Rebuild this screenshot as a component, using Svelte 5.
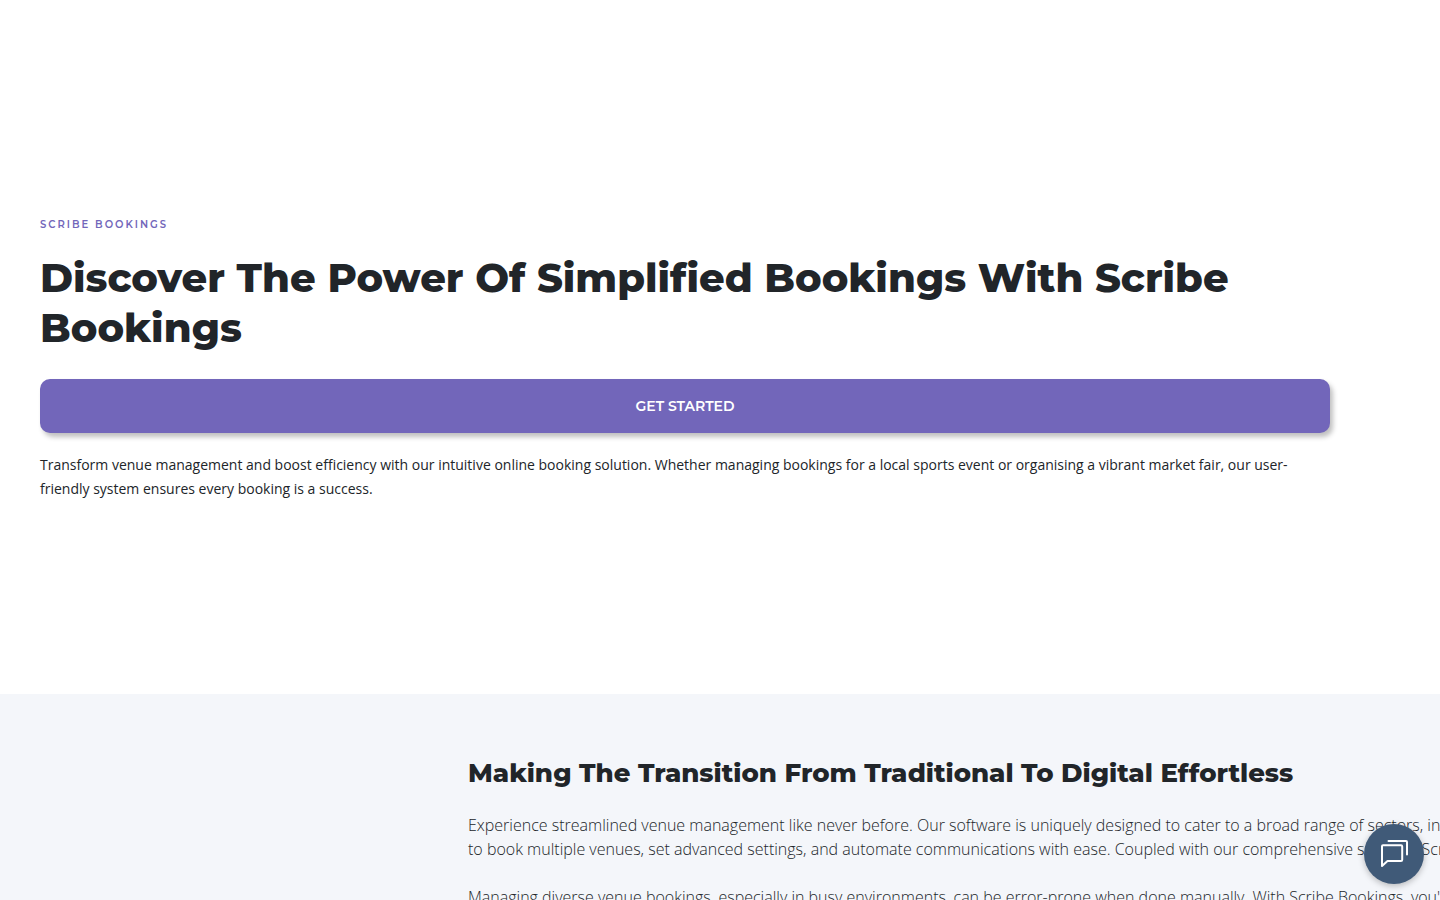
<script>
	let chatOpen = $state(false)

	const toggleChat = () => {
		chatOpen = !chatOpen
	}
</script>

<main>
	<section class="hero">
		<p class="eyebrow">Scribe Bookings</p>
		<h1>Discover The Power Of Simplified Bookings With Scribe Bookings</h1>
		<a href="#started" class="cta">Get Started</a>
		<p class="intro">
			Transform venue management and boost efficiency with our intuitive online booking solution. Whether managing bookings for a local sports event or organising a vibrant market fair, our user-friendly system ensures every booking is a success.
		</p>
	</section>

	<section class="feature" id="started">
		<div class="copy">
			<h2>Making The Transition From Traditional To Digital Effortless</h2>
			<p>
				Experience streamlined venue management like never before. Our software is uniquely designed to cater to a broad range of sectors, including<br>
				to book multiple venues, set advanced settings, and automate communications with ease. Coupled with our comprehensive support, Scribe
			</p>
			<p>Managing diverse venue bookings, especially in busy environments, can be error-prone when done manually. With Scribe Bookings, you'll</p>
		</div>
	</section>
</main>

<button class="chat-btn" aria-label="Open chat" aria-expanded={chatOpen} onclick={toggleChat}>
	<svg viewBox="0 0 30 30" width="30" height="30" fill="none" stroke="#fff" stroke-width="2" stroke-linejoin="round" stroke-linecap="round">
		<path d="M4 6.2h18a1.2 1.2 0 0 1 1.2 1.2v13.3a1.2 1.2 0 0 1-1.2 1.2H8.5L3 27V7.2a1 1 0 0 1 1-1z" />
		<path d="M9.5 2H27a1 1 0 0 1 1 1v12.5" />
	</svg>
</button>

<style>
	:global(body) {
		margin: 0;
		background-color: #fff;
		color: #212529;
		font-family: "Open Sans", sans-serif;
		overflow-x: hidden;
	}

	h1, h2, p {
		margin: 0;
	}

	h1, h2, .eyebrow, .cta {
		font-family: Montserrat, Inter, sans-serif;
	}

	.hero {
		padding: 213px 110px 193px 40px;
	}

	.eyebrow {
		font-size: 10px;
		line-height: 24px;
		font-weight: 600;
		letter-spacing: 2px;
		text-transform: uppercase;
		color: #7266ba;
	}

	h1 {
		margin-top: 16px;
		font-size: 40px;
		line-height: 50px;
		font-weight: 800;
		color: #212529;
	}

	.cta {
		display: block;
		margin-top: 26px;
		border-radius: 10px;
		background-color: #7266ba;
		box-shadow: 3px 4px 5px 0 rgba(0,0,0,0.25);
		color: #fff;
		font-size: 14px;
		line-height: 54px;
		font-weight: 600;
		text-align: center;
		text-decoration: none;
		text-transform: uppercase;
	}

	.intro {
		margin-top: 20px;
		font-size: 14px;
		line-height: 24px;
	}

	.feature {
		padding: 60px 0 60px 468px;
		background-color: #f4f6fa;
		overflow: hidden;
	}

	/* lines run on past the right edge */
	.copy {
		white-space: nowrap;
	}

	h2 {
		margin-bottom: 21px;
		font-size: 26px;
		line-height: 38px;
		font-weight: 800;
		color: #212529;
	}

	.copy p {
		margin-bottom: 24px;
		font-size: 16px;
		line-height: 24px;
		font-weight: 300;
	}

	.chat-btn {
		display: flex;
		align-items: center;
		justify-content: center;
		position: fixed;
		right: 16px;
		bottom: 16px;
		width: 60px;
		height: 60px;
		padding: 0;
		border: 0;
		border-radius: 50%;
		background-color: #405a78;
		box-shadow: 0 2px 6px 0 rgba(0,0,0,0.25);
		cursor: pointer;
	}
</style>
